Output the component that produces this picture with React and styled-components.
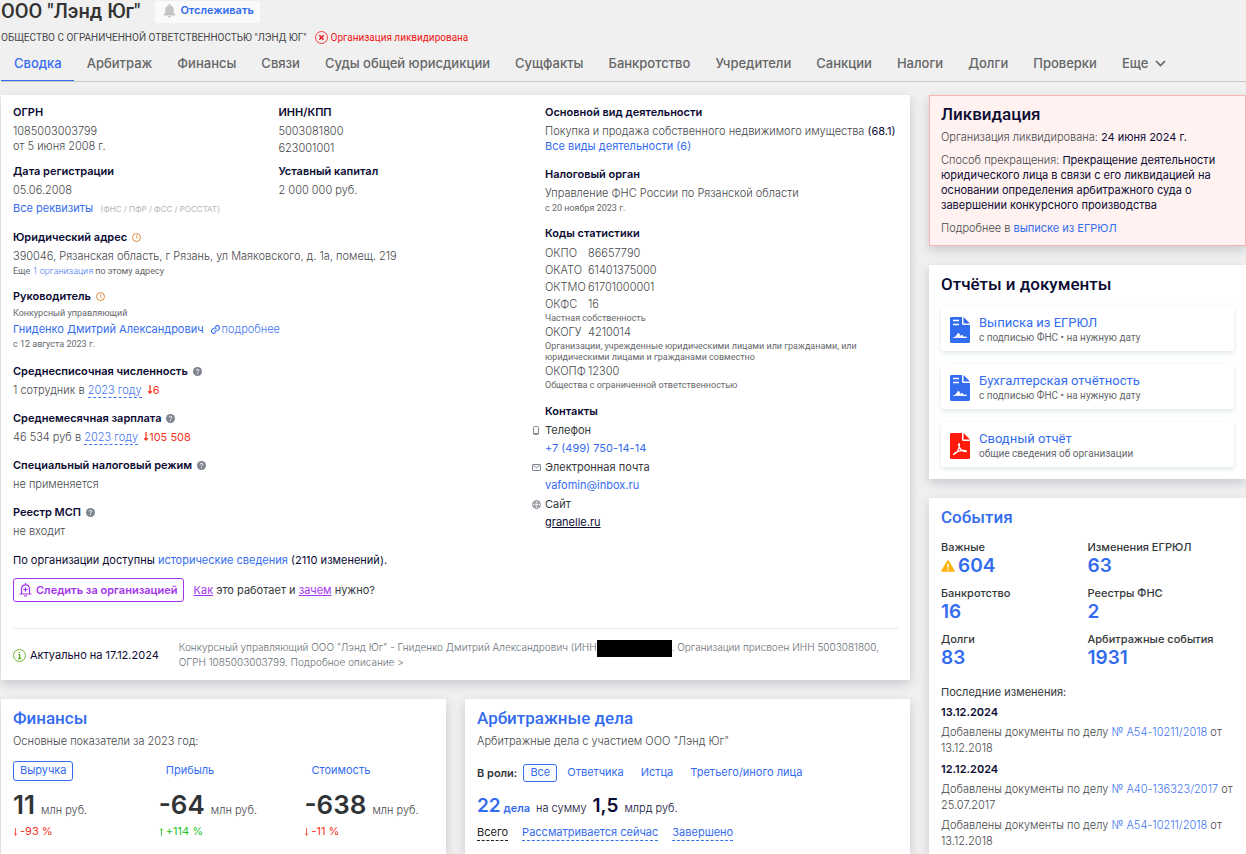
import React from "react";
import styled, { createGlobalStyle, css } from "styled-components";

const c = {
  page: "#f0f0f0",
  ink: "#0b0b33",
  dark: "#35383b",
  text: "#46484c",
  blue: "#346cf0",
  lightBlue: "#3f76f3",
  red: "#f5331c",
  green: "#1ec41e",
  violet: "#a335ee",
};

const bodyFont = 'Inter, "Liberation Sans", sans-serif';
const narrowFont = 'Roboto, "Liberation Sans", sans-serif';

const Global = createGlobalStyle`
  *, *::before, *::after { box-sizing: border-box; }
  html, body { margin: 0; padding: 0; }
  body {
    background: ${c.page};
    color: ${c.text};
    font-family: ${bodyFont};
    font-size: 11px;
    font-weight: 300;
    line-height: 15px;
  }
  h1, h2, h3, p, dl, dd, dt, ul { margin: 0; padding: 0; font: inherit; }
  button { font: inherit; margin: 0; cursor: pointer; }
  svg { flex: none; }
`;

const Page = styled.div`
  display: flex;
  flex-direction: column;
  min-height: 100vh;
  overflow: hidden;
  padding-left: 1px;
`;

const TitleRow = styled.header`
  display: flex;
  flex: none;
  align-items: flex-start;
  gap: 15px;
  height: 24px;
`;
const CompanyName = styled.h1`
  font-family: ${narrowFont};
  font-size: 20px;
  font-weight: 500;
  line-height: 22px;
  color: #333;
`;
const TrackButton = styled.button`
  display: flex;
  align-items: center;
  gap: 4px;
  height: 22px;
  margin-top: 1px;
  padding: 0 6px 3px 8px;
  border: 0;
  border-radius: 3px;
  background: #fafafa;
  color: ${c.blue};
  font-weight: 600;
`;
const SubRow = styled.div`
  display: flex;
  flex: none;
  align-items: center;
  gap: 8px;
  height: 26px;
  font-family: ${narrowFont};
  font-size: 10px;
  font-weight: 400;
`;
const Liquidated = styled.span`
  display: flex;
  align-items: center;
  gap: 3px;
  color: #f01414;
`;
const Tabs = styled.nav`
  display: flex;
  flex: none;
  height: 32px;
  border-bottom: 1px solid #c8c8c8;
`;
const Tab = styled.a`
  display: flex;
  align-items: center;
  gap: 7px;
  height: 31px;
  padding: 0 12px 4px 13px;
  border-bottom: 1px solid ${(p) => (p.$active ? c.blue : "transparent")};
  color: ${(p) => (p.$active ? c.blue : "#666")};
  font-size: 13px;
  font-weight: 500;
  text-decoration: none;
  white-space: nowrap;
`;

const Layout = styled.div`
  flex: 1;
  display: grid;
  grid-template-columns: minmax(0, 1fr) 317px;
  gap: 19px;
  padding-top: 13px;
`;
const Column = styled.div`
  display: flex;
  flex-direction: column;
  gap: 19px;
`;
const Card = styled.section`
  padding: 8px 12px;
  background: #fff;
  box-shadow: 0 4px 10px rgba(60, 70, 90, 0.22);
  ${(p) => p.$fill && css`flex: 1; padding-bottom: 0;`}
`;
const CardTitle = styled.h2`
  font-family: ${narrowFont};
  font-size: 17px;
  font-weight: 500;
  line-height: 22px;
  color: ${(p) => (p.$link ? c.blue : c.ink)};
`;
const CardLead = styled.p`
  margin-top: 5px;
`;
const Pair = styled.div`
  display: grid;
  grid-template-columns: 1fr 1fr;
  gap: 19px;
  flex: 1;
`;

const Link = styled.a`
  color: ${(p) => (p.$soft ? c.lightBlue : c.blue)};
  font-weight: ${(p) => (p.$soft ? 300 : 400)};
  text-decoration: none;
`;
const PeriodLink = styled(Link)`
  border-bottom: 1px dashed currentColor;
`;
const Strong = styled.b`
  color: ${c.ink};
  font-weight: ${(p) => (p.$medium ? 600 : 400)};
`;
const Drop = styled.span`
  margin-left: 2px;
  color: ${c.red};
  font-weight: 400;
`;

const Details = styled.div`
  display: grid;
  grid-template-columns: 60% minmax(0, 1fr);
  column-gap: 1px;
`;
const IdGrid = styled.div`
  display: grid;
  grid-template-columns: 1fr 1fr;
  row-gap: 6px;
`;
const Section = styled.div`
  margin-top: ${(p) => p.$top || 0}px;
`;
const Label = styled.h3`
  display: flex;
  align-items: center;
  gap: 5px;
  color: ${c.ink};
  font-weight: 600;
  line-height: 19px;
  margin-bottom: ${(p) => (p.$tight ? 0 : 2)}px;
`;
const Small = styled.p`
  font-family: ${narrowFont};
  font-size: 9px;
  font-weight: 400;
  line-height: ${(p) => (p.$dense ? 11 : 14)}px;
  color: #66686b;
`;
const Faint = styled.span`
  margin-left: 4px;
  font-size: 8px;
  font-weight: 400;
  color: #b4b6ba;
`;
const Requisites = styled.p`
  margin-top: 3px;
`;
const Kpp = styled.p`
  margin-top: 2px;
`;
const Person = styled.p`
  display: flex;
  align-items: center;
  gap: 7px;
  margin-top: 2px;
`;
const More = styled(Link)`
  display: flex;
  align-items: center;
  gap: 2px;
`;
const Code = styled.div`
  display: grid;
  grid-template-columns: 43px 1fr;
  line-height: 17px;
`;
const Contact = styled.div`
  margin-bottom: 1px;
  line-height: 18px;
`;
const ContactKind = styled.p`
  display: flex;
  align-items: center;
  gap: 4px;
  margin-left: -13px;
  color: ${c.dark};
  font-weight: 400;
`;
const SiteLink = styled.a`
  color: ${c.ink};
  font-weight: 400;
`;
const History = styled.p`
  margin-top: 14px;
  color: ${c.ink};
  font-weight: 400;
`;
const FollowRow = styled.div`
  display: flex;
  align-items: center;
  gap: 10px;
  margin-top: 10px;
  color: ${c.dark};
  font-weight: 400;
`;
const FollowButton = styled.button`
  display: flex;
  align-items: center;
  gap: 4px;
  height: 24px;
  padding: 0 5px;
  border: 1px solid ${c.violet};
  border-radius: 3px;
  background: #fff;
  color: ${c.violet};
  font-weight: 600;
`;
const VioletLink = styled.a`
  color: ${c.violet};
`;
const Actual = styled.footer`
  display: flex;
  align-items: center;
  gap: 20px;
  margin-top: 26px;
  padding: 11px 0 2px;
  border-top: 1px solid #e6e8ee;
`;
const ActualDate = styled.div`
  display: flex;
  align-items: center;
  gap: 4px;
  color: ${c.ink};
  font-weight: 400;
  white-space: nowrap;
`;
const Summary = styled.p`
  color: #686f75;
  font-size: 10px;
`;
const Redacted = styled.span`
  display: inline-block;
  width: 75px;
  height: 17px;
  margin: -2px 0;
  background: #000;
  vertical-align: middle;
`;

const Metrics = styled.div`
  display: grid;
  grid-template-columns: 9fr 9fr 8fr;
  margin-top: 12px;
`;
const Chip = styled.button`
  height: ${(p) => p.$h || 20}px;
  padding: 0 6px 2px;
  border: 1px solid ${(p) => (p.$active ? c.blue : "transparent")};
  border-radius: 3px;
  background: transparent;
  color: ${c.blue};
  font-weight: 400;
  line-height: 15px;
`;
const Amount = styled.p`
  display: flex;
  align-items: baseline;
  gap: 6px;
  margin-top: 10px;
  line-height: 28px;
`;
const AmountValue = styled.span`
  color: #303436;
  font-size: 26px;
  font-weight: 600;
`;
const Change = styled.p`
  display: flex;
  align-items: center;
  gap: 2px;
  color: ${(p) => (p.$up ? c.green : c.red)};
  font-weight: 400;
`;
const Roles = styled.div`
  display: flex;
  align-items: center;
  gap: 3px;
  margin-top: 15px;
`;
const RolesLabel = styled.span`
  margin-right: 3px;
  color: ${c.dark};
  font-weight: 600;
`;
const Totals = styled.p`
  display: flex;
  align-items: baseline;
  margin-top: 12px;
  gap: 6px;
  color: ${c.ink};
  line-height: 24px;
`;
const TotalLink = styled.a`
  color: ${c.blue};
  font-weight: 600;
  text-decoration: none;
`;
const Big = styled.span`
  font-size: 19px;
  font-weight: 600;
`;
const Filters = styled.div`
  display: flex;
  gap: 14px;
  margin-top: 5px;
`;
const Filter = styled.a`
  border-bottom: 1px dashed currentColor;
  color: ${(p) => (p.$current ? "#222" : c.blue)};
  font-weight: 400;
  text-decoration: none;
`;

const Alert = styled(Card)`
  padding: 7px 11px 9px;
  border: 1px solid #fcb3b3;
  background: #fff2f0;
`;
const AlertText = styled.p`
  margin-top: ${(p) => (p.$first ? 5 : 8)}px;
`;
const Docs = styled.div`
  display: grid;
  gap: 13px;
  margin-top: 11px;
  padding-bottom: 4px;
`;
const DocCard = styled.a`
  display: flex;
  align-items: center;
  gap: 9px;
  height: 45px;
  padding: 2px 9px 0;
  border-radius: 3px;
  box-shadow: 0 2px 5px rgba(60, 110, 140, 0.17);
  font-family: ${narrowFont};
  text-decoration: none;
`;
const DocName = styled.span`
  display: block;
  color: ${c.blue};
  font-size: 13px;
  font-weight: 400;
`;
const DocNote = styled.span`
  display: block;
  color: #66686b;
  font-size: 10px;
  font-weight: 400;
`;
const EventGrid = styled.dl`
  display: grid;
  grid-template-columns: 1fr 1fr;
  row-gap: 9px;
  margin-top: 12px;
`;
const EventName = styled.dt`
  color: ${c.dark};
  font-weight: 500;
`;
const EventCount = styled.dd`
  display: flex;
  align-items: center;
  gap: 3px;
  color: ${c.blue};
  font-size: 19px;
  font-weight: 600;
  line-height: 22px;
`;
const Recent = styled.p`
  margin-top: 16px;
  color: ${c.dark};
  font-weight: 400;
`;
const ChangeDate = styled.h3`
  margin: 3px 0;
  color: ${c.ink};
  font-weight: 600;
  line-height: 18px;
`;
const ChangeText = styled.p`
  margin-bottom: 4px;
  line-height: 16px;
`;

const ClockIcon = () => (
  <svg width="9" height="9" viewBox="0 0 9 9" fill="none" stroke="#dd8a3c">
    <circle cx="4.5" cy="4.5" r="4" />
    <path d="M4.5 2v2.7l1.6 1" strokeWidth=".8" />
  </svg>
);
const HelpIcon = () => (
  <svg width="9" height="9" viewBox="0 0 9 9">
    <circle cx="4.5" cy="4.5" r="4.5" fill="#7f8590" />
    <path d="M3.2 3.5c0-1.7 2.6-1.6 2.6-.1 0 1-1.3.9-1.3 2M4.5 6.2v.9" stroke="#fff" fill="none" />
  </svg>
);
const ArrowIcon = ({ up, tall }) => (
  <svg width={tall ? 6 : 5} height={tall ? 9 : 8} viewBox="0 0 6 10" fill="none" stroke="currentColor" strokeWidth={tall ? 1.4 : 1}>
    <path d={up ? "M3 10V1M1 3l2-2 2 2" : "M3 0v9M1 7l2 2 2-2"} />
  </svg>
);
const BellIcon = () => (
  <svg width="13" height="14" viewBox="0 0 13 14" fill="#c4c4c4">
    <path d="M6.5 0c.6 0 1 .4 1 1v.5c2 .5 3.2 2 3.2 4.2v3l1.6 1.8v1H.7v-1l1.6-1.8v-3c0-2.2 1.2-3.7 3.2-4.2V1c0-.6.4-1 1-1zM5 12h3c0 2-3 2-3 0z" />
  </svg>
);
const BellPlusIcon = () => (
  <svg width="13" height="14" viewBox="0 0 13 14" fill="none" stroke="currentColor" strokeWidth="1.2">
    <path d="M2.5 10.8V6c0-2.4 1.6-4.2 4-4.2s4 1.8 4 4.2v4.8M.5 11h12M6.5 0v2M6.5 4.3v4.4M4.3 6.5h4.4M5.3 12.8h2.4" />
  </svg>
);
const CrossCircleIcon = () => (
  <svg width="13" height="13" viewBox="0 0 13 13" fill="none" stroke="#f01414">
    <circle cx="6.5" cy="6.5" r="6" strokeWidth=".8" />
    <path d="M4.3 4.3l4.4 4.4M8.7 4.3L4.3 8.7" strokeWidth="1.5" />
  </svg>
);
const InfoIcon = () => (
  <svg width="13" height="13" viewBox="0 0 13 13" fill="none" stroke="#5fae1e">
    <circle cx="6.5" cy="6.5" r="6" strokeWidth=".9" />
    <path d="M5.3 5.7h1.4v3.6M5 9.5h3.2M6.4 3v1.3" strokeWidth="1.3" />
  </svg>
);
const ChevronIcon = () => (
  <svg width="11" height="7" viewBox="0 0 11 7" fill="none" stroke="currentColor" strokeWidth="1.7">
    <path d="M1 1l4.5 4.5L10 1" />
  </svg>
);
const ChainIcon = () => (
  <svg width="9" height="9" viewBox="0 0 24 24" fill="none" stroke="currentColor" strokeWidth="3" strokeLinecap="round">
    <path d="M10 14a5.5 5.5 0 0 0 8 .5l3-3a5.5 5.5 0 0 0-8-8l-1.5 1.5M14 10a5.5 5.5 0 0 0-8-.5l-3 3a5.5 5.5 0 0 0 8 8l1.5-1.5" />
  </svg>
);
const PhoneIcon = () => (
  <svg width="9" height="9" viewBox="0 0 9 9" fill="none" stroke="#7f8590">
    <rect x="1.5" y=".5" width="5" height="8" rx="1" />
    <path d="M1.5 7.5h5" />
  </svg>
);
const MailIcon = () => (
  <svg width="9" height="9" viewBox="0 0 9 9" fill="none" stroke="#7f8590">
    <rect x=".5" y="1.5" width="8" height="6" rx=".5" />
    <path d="M1.5 2.5l3 2.3 3-2.3" />
  </svg>
);
const GlobeIcon = () => (
  <svg width="9" height="9" viewBox="0 0 9 9" fill="none" stroke="#7f8590" strokeWidth=".9">
    <circle cx="4.5" cy="4.5" r="4" />
    <ellipse cx="4.5" cy="4.5" rx="1.8" ry="4" />
    <path d="M.8 3h7.4M.8 6h7.4" />
  </svg>
);
const WarningIcon = () => (
  <svg width="14" height="12" viewBox="0 0 14 12">
    <path d="M7 .3c.4 0 .7.2.9.5l5.7 9.7c.4.7 0 1.3-.7 1.3H1.1c-.7 0-1.1-.6-.7-1.3L6.1.8c.2-.3.5-.5.9-.5z" fill="#ffb20d" />
    <path d="M7 3.8v3.7M7 8.7v1.5" stroke="#fff" strokeWidth="1.5" />
  </svg>
);
const docShape = "M1.5 0H12v6.5c0 .8.7 1.500 1.5 1.500H20v16.500c0 .8-.7 1.500-1.500 1.500h-17C.7 26 0 25.300 0 24.500v-23C0 .7.7 0 1.500 0zM13.500 0L20 6.500h-6.500z";
const SignedDocIcon = () => (
  <svg width="20" height="26" viewBox="0 0 20 26">
    <path d={docShape} fill="#346cf0" />
    <path d="M3 3.5h6M3 7.5h6" stroke="#fff" strokeWidth="1.3" />
    <path d="M3.500 20.500h1.500L8.500 16l2 3.500 1.500-1.500 1.500 2h3v.5z" fill="#fff" stroke="#fff" strokeWidth=".8" strokeLinejoin="round" />
  </svg>
);
const PdfIcon = () => (
  <svg width="20" height="26" viewBox="0 0 20 26">
    <path d={docShape} fill="#ff1a0a" />
    <path d="M4 21.5c3-1.5 5.5-6 5.5-10 0-1.2-1.2-1-1 .3.6 3.500 3.500 6.700 7.300 6.900 1 0 .8-1-.6-1.200-3.500-.4-8 .8-10.800 2.800-1 .8-.8 1.500-.4 1.200z" fill="none" stroke="#fff" strokeWidth="1.2" />
  </svg>
);

const tabs = ["Сводка", "Арбитраж", "Финансы", "Связи", "Суды общей юрисдикции", "Сущфакты", "Банкротство", "Учредители", "Санкции", "Налоги", "Долги", "Проверки"];

const codes = [
  ["ОКПО", "86657790"],
  ["ОКАТО", "61401375000"],
  ["ОКТМО", "61701000001"],
  ["ОКФС", "16", "Частная собственность"],
  ["ОКОГУ", "4210014", "Организации, учрежденные юридическими лицами или гражданами, или юридическими лицами и гражданами совместно"],
  ["ОКОПФ", "12300", "Общества с ограниченной ответственностью"],
];

const metrics = [
  { name: "Выручка", value: "11", change: "-93 %" },
  { name: "Прибыль", value: "-64", change: "+114 %", up: true },
  { name: "Стоимость", value: "-638", change: "-11 %" },
];

const events = [
  ["Важные", "604", true],
  ["Изменения ЕГРЮЛ", "63"],
  ["Банкротство", "16"],
  ["Реестры ФНС", "2"],
  ["Долги", "83"],
  ["Арбитражные события", "1931"],
];

const docs = [
  { name: "Выписка из ЕГРЮЛ", note: "с подписью ФНС • на нужную дату", Icon: SignedDocIcon },
  { name: "Бухгалтерская отчётность", note: "с подписью ФНС • на нужную дату", Icon: SignedDocIcon },
  { name: "Сводный отчёт", note: "общие сведения об организации", Icon: PdfIcon },
];

const recent = [
  { date: "13.12.2024", items: [["№ А54-10211/2018", "13.12.2018"]] },
  { date: "12.12.2024", items: [["№ А40-136323/2017", "25.07.2017"], ["№ А54-10211/2018", "13.12.2018"]] },
];

function CompanyDetails() {
  return (
    <Card>
      <Details>
        <div>
          <IdGrid>
            <div>
              <Label>ОГРН</Label>
              <p>1085003003799</p>
              <p>от 5 июня 2008 г.</p>
            </div>
            <div>
              <Label>ИНН/КПП</Label>
              <p>5003081800</p>
              <Kpp>623001001</Kpp>
            </div>
            <div>
              <Label>Дата регистрации</Label>
              <p>05.06.2008</p>
              <Requisites>
                <Link href="#requisites">Все реквизиты</Link> <Faint>(ФНС / ПФР / ФСС / РОССТАТ)</Faint>
              </Requisites>
            </div>
            <div>
              <Label>Уставный капитал</Label>
              <p>2 000 000 руб.</p>
            </div>
          </IdGrid>
          <Section $top={11}>
            <Label>Юридический адрес <ClockIcon /></Label>
            <p>390046, Рязанская область, г Рязань, ул Маяковского, д. 1а, помещ. 219</p>
            <Small>Еще <Link $soft href="#same-address">1 организация</Link> по этому адресу</Small>
          </Section>
          <Section $top={9}>
            <Label $tight>Руководитель <ClockIcon /></Label>
            <Small>Конкурсный управляющий</Small>
            <Person>
              <Link href="#person">Гниденко Дмитрий Александрович</Link>
              <More $soft href="#person-more"><ChainIcon /> подробнее</More>
            </Person>
            <Small>с 12 августа 2023 г.</Small>
          </Section>
          <Section $top={11}>
            <Label>Среднесписочная численность <HelpIcon /></Label>
            <p>1 сотрудник в <PeriodLink $soft href="#staff">2023 году</PeriodLink> <Drop><ArrowIcon tall />6</Drop></p>
          </Section>
          <Section $top={11}>
            <Label>Среднемесячная зарплата <HelpIcon /></Label>
            <p>46 534 руб в <PeriodLink $soft href="#salary">2023 году</PeriodLink> <Drop><ArrowIcon tall />105 508</Drop></p>
          </Section>
          <Section $top={11}>
            <Label>Специальный налоговый режим <HelpIcon /></Label>
            <p>не применяется</p>
          </Section>
          <Section $top={11}>
            <Label>Реестр МСП <HelpIcon /></Label>
            <p>не входит</p>
          </Section>
        </div>
        <div>
          <Label>Основной вид деятельности</Label>
          <p>Покупка и продажа собственного недвижимого имущества <Strong>(68.1)</Strong></p>
          <p><Link href="#activities">Все виды деятельности (6)</Link></p>
          <Section $top={11}>
            <Label>Налоговый орган</Label>
            <p>Управление ФНС России по Рязанской области</p>
            <Small>с 20 ноября 2023 г.</Small>
          </Section>
          <Section $top={9}>
            <Label>Коды статистики</Label>
            {codes.map(([name, value, note]) => (
              <React.Fragment key={name}>
                <Code><span>{name}</span><span>{value}</span></Code>
                {note && <Small $dense>{note}</Small>}
              </React.Fragment>
            ))}
          </Section>
          <Section $top={11}>
            <Label $tight>Контакты</Label>
            <Contact>
              <ContactKind><PhoneIcon /> Телефон</ContactKind>
              <Link href="tel:+74997501414">+7 (499) 750-14-14</Link>
            </Contact>
            <Contact>
              <ContactKind><MailIcon /> Электронная почта</ContactKind>
              <Link href="mailto:vafomin@inbox.ru">vafomin@inbox.ru</Link>
            </Contact>
            <Contact>
              <ContactKind><GlobeIcon /> Сайт</ContactKind>
              <SiteLink href="#site">granelle.ru</SiteLink>
            </Contact>
          </Section>
        </div>
      </Details>
      <History>По организации доступны <Link href="#history">исторические сведения</Link> (2110 изменений).</History>
      <FollowRow>
        <FollowButton type="button"><BellPlusIcon /> Следить за организацией</FollowButton>
        <p><VioletLink href="#how">Как</VioletLink> это работает и <VioletLink href="#why">зачем</VioletLink> нужно?</p>
      </FollowRow>
      <Actual>
        <ActualDate><InfoIcon /> Актуально на 17.12.2024</ActualDate>
        <Summary>
          Конкурсный управляющий ООО "Лэнд Юг" - Гниденко Дмитрий Александрович (ИНН<Redacted />. Организации присвоен ИНН 5003081800, ОГРН 1085003003799. Подробное описание &gt;
        </Summary>
      </Actual>
    </Card>
  );
}

function Finance() {
  return (
    <Card>
      <CardTitle $link>Финансы</CardTitle>
      <CardLead>Основные показатели за 2023 год:</CardLead>
      <Metrics>
        {metrics.map((m, i) => (
          <div key={m.name}>
            <Chip type="button" $active={i === 0}>{m.name}</Chip>
            <Amount><AmountValue>{m.value}</AmountValue> млн руб.</Amount>
            <Change $up={m.up}><ArrowIcon up={m.up} /> {m.change}</Change>
          </div>
        ))}
      </Metrics>
    </Card>
  );
}

function Arbitration() {
  return (
    <Card>
      <CardTitle $link>Арбитражные дела</CardTitle>
      <CardLead>Арбитражные дела с участием ООО "Лэнд Юг"</CardLead>
      <Roles>
        <RolesLabel>В роли:</RolesLabel>
        {["Все", "Ответчика", "Истца", "Третьего/иного лица"].map((r, i) => (
          <Chip key={r} type="button" $h={18} $active={i === 0}>{r}</Chip>
        ))}
      </Roles>
      <Totals>
        <TotalLink href="#cases"><Big>22</Big> дела</TotalLink> на сумму <Strong $medium><Big>1,5</Big></Strong> млрд руб.
      </Totals>
      <Filters>
        <Filter $current href="#all">Всего</Filter>
        <Filter href="#pending">Рассматривается сейчас</Filter>
        <Filter href="#closed">Завершено</Filter>
      </Filters>
    </Card>
  );
}

function Sidebar() {
  return (
    <Column as="aside">
      <Alert>
        <CardTitle>Ликвидация</CardTitle>
        <AlertText $first>Организация ликвидирована: <Strong>24 июня 2024 г.</Strong></AlertText>
        <AlertText>Способ прекращения: <Strong>Прекращение деятельности юридического лица в связи с его ликвидацией на основании определения арбитражного суда о завершении конкурсного производства</Strong></AlertText>
        <AlertText>Подробнее в <Link href="#egrul">выписке из ЕГРЮЛ</Link></AlertText>
      </Alert>
      <Card>
        <CardTitle>Отчёты и документы</CardTitle>
        <Docs>
          {docs.map(({ name, note, Icon }) => (
            <DocCard key={name} href="#doc">
              <Icon />
              <span><DocName>{name}</DocName><DocNote>{note}</DocNote></span>
            </DocCard>
          ))}
        </Docs>
      </Card>
      <Card $fill>
        <CardTitle $link>События</CardTitle>
        <EventGrid>
          {events.map(([name, count, warn]) => (
            <div key={name}>
              <EventName>{name}</EventName>
              <EventCount>{warn && <WarningIcon />}{count}</EventCount>
            </div>
          ))}
        </EventGrid>
        <Recent>Последние изменения:</Recent>
        {recent.map((day) => (
          <React.Fragment key={day.date}>
            <ChangeDate>{day.date}</ChangeDate>
            {day.items.map(([num, from]) => (
              <ChangeText key={num}>Добавлены документы по делу <Link $soft href="#case">{num}</Link> от {from}</ChangeText>
            ))}
          </React.Fragment>
        ))}
      </Card>
    </Column>
  );
}

export default function App() {
  return (
    <>
      <Global />
      <Page>
        <TitleRow>
          <CompanyName>ООО "Лэнд Юг"</CompanyName>
          <TrackButton type="button"><BellIcon /> Отслеживать</TrackButton>
        </TitleRow>
        <SubRow>
          <span>ОБЩЕСТВО С ОГРАНИЧЕННОЙ ОТВЕТСТВЕННОСТЬЮ "ЛЭНД ЮГ"</span>
          <Liquidated><CrossCircleIcon /> Организация ликвидирована</Liquidated>
        </SubRow>
        <Tabs>
          {tabs.map((t, i) => (
            <Tab key={t} href="#tab" $active={i === 0}>{t}</Tab>
          ))}
          <Tab href="#more">Еще <ChevronIcon /></Tab>
        </Tabs>
        <Layout>
          <Column as="main">
            <CompanyDetails />
            <Pair>
              <Finance />
              <Arbitration />
            </Pair>
          </Column>
          <Sidebar />
        </Layout>
      </Page>
    </>
  );
}
